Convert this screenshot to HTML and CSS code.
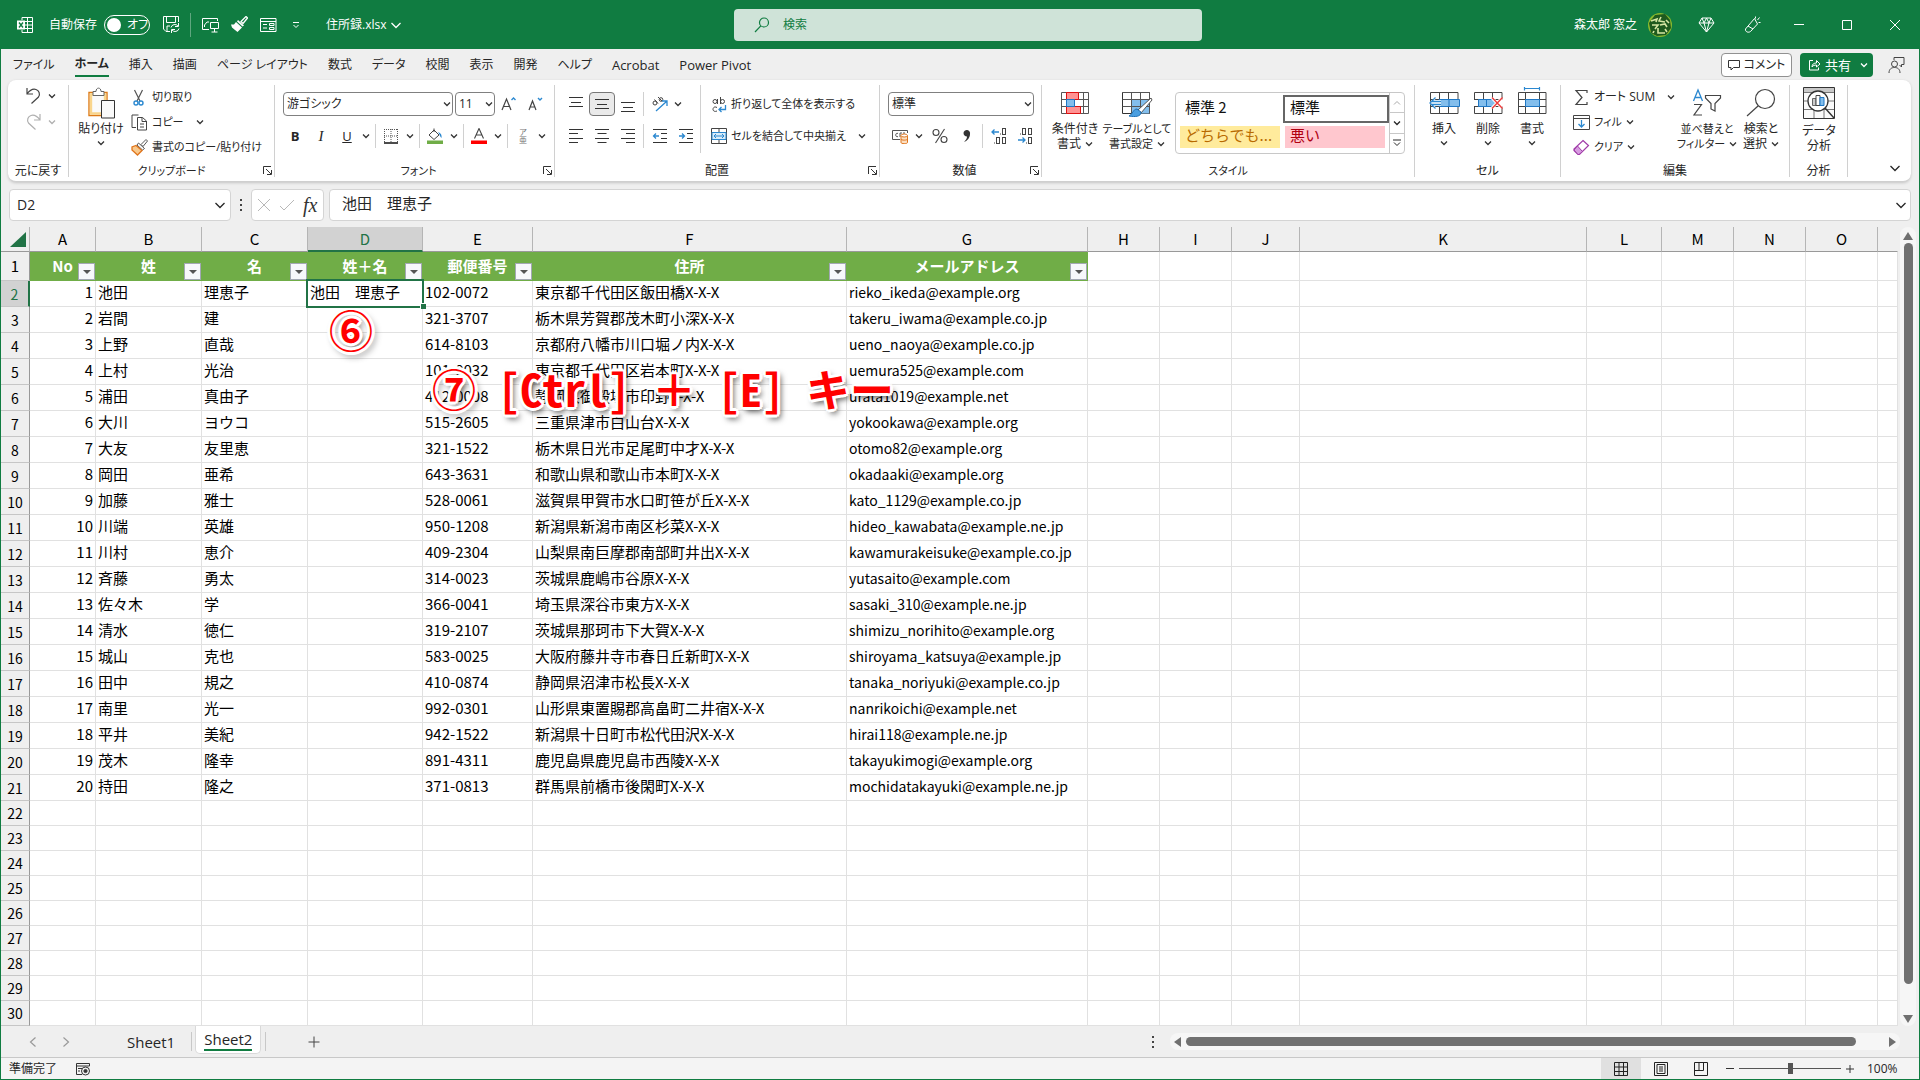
FILE: index.html
```html
<!DOCTYPE html>
<html lang="ja">
<head>
<meta charset="utf-8">
<title>住所録.xlsx - Excel</title>
<meta name="viewport" content="width=device-width, initial-scale=1">
<link rel="stylesheet" href="styles.css">
</head>
<body>
<svg class="defs" aria-hidden="true">
  <symbol id="chev" viewBox="0 0 8 8"><path d="M1 2.5 4 5.5 7 2.5" fill="none" stroke="currentColor" stroke-width="1.3"/></symbol>
  <symbol id="chev-lg" viewBox="0 0 12 12"><path d="M1.5 4 6 8.5 10.5 4" fill="none" stroke="currentColor" stroke-width="1.3"/></symbol>
  <symbol id="launch" viewBox="0 0 9 9"><path d="M.5 8V.5H8M3 3l5 5M8.5 4v4.5H4" fill="none" stroke="#333"/></symbol>
</svg>

<header class="titlebar">
  <div class="title-left">
    <svg class="app-icon" width="16" height="18" viewBox="0 0 16 18" fill="none" stroke="#fff"><path d="M5 4V1.500H15.500V16.500H5V14M10.500 1.500V16.500M5 5.500H15.500M8 9H15.500M5 12.500H15.500"/><path d="M0 4.500H8V13.500H0z" fill="#fff" stroke="none"/><path d="M2 6.500 6 11.500M6 6.500 2 11.500" stroke="#107c41" stroke-width="1.400"/></svg>
    <span class="autosave-label" id="as">自動保存</span>
    <button class="toggle" role="switch" aria-checked="false" aria-labelledby="as"><span class="knob"></span>オフ</button>
    <button class="tb save" aria-label="保存"><svg width="17" height="17" viewBox="0 0 17 17" fill="none" stroke="#fff"><path d="M7 15.500H3L.5 13V.5H15.500V6M3.500.5V6.500H12.500V.5M4 15V10H7"/><path d="M8 11.500a4 4 0 0 1 7-1.500M15.500 7V10.500H12M16 12.500a4 4 0 0 1-7 1.500M8.500 17V13.500H12"/></svg></button>
    <span class="tb-sep"></span>
    <button class="tb present" aria-label="スライド"><svg width="17" height="17" viewBox="0 0 17 17" fill="none" stroke="#fff"><path d="M7 13.500H.5V2.500H15.500V5M2.500 11V9L5 6H7"/><path d="M8.500 6.500H16.500V12.500H8.500zM12.500 12.500V16M9.500 16H15.500"/></svg></button>
    <button class="tb brush" aria-label="書式のコピー"><svg width="17" height="17" viewBox="0 0 17 17"><path d="M15 .5 16.500 2 12 7.500 10 5.500z" fill="none" stroke="#fff" stroke-width="1.300"/><path d="M7 4 13 9.500 11.500 10.500 6 5.500z" fill="#fff"/><path d="M5 6 11 11.500 6.500 16 4 14 1 11.500 0 8.500 3 8.500z" fill="#fff"/></svg></button>
    <button class="tb form" aria-label="フォーム"><svg width="17" height="16" viewBox="0 0 17 16" fill="none" stroke="#fff"><path d="M.5 1.500H16V14.500H.5zM.5 4.500H16M3 7.500H7M3 11H7M9.500 6.500H14V8.500H9.500zM9.500 10.500H14V12.500H9.500z"/></svg></button>
    <button class="tb more" aria-label="カスタマイズ"><svg width="8" height="8" viewBox="0 0 8 8" fill="none" stroke="#fff"><path d="M1 1.500H7M1.500 4 4 6.500 6.500 4"/></svg></button>
    <button class="filename">住所録.xlsx <svg width="12" height="12"><use href="#chev-lg"/></svg></button>
  </div>
  <label class="search"><svg width="16" height="16" viewBox="0 0 16 16" fill="none" stroke="#107c41" stroke-width="1.200"><circle cx="10" cy="5.500" r="4.500"/><path d="M6.800 8.800 1 15"/></svg><input type="text" placeholder="検索" aria-label="検索"></label>
  <div class="title-right">
    <span class="user">森太郎 窓之</span>
    <svg class="avatar" width="24" height="24" viewBox="0 0 24 24" fill="none"><circle cx="12" cy="12" r="12" fill="#8ab92d"/><path d="M7 2 17 1 22 7 23 15 18 22 9 23 3 20 1 10z" fill="#1f5a1e"/><path d="M3 8 9 6 8 9M13 4 11 8 17 9M18 7 21 10M4 12H10L7 16M12 12 17 11 19 14M6 18 5 20M10 15V20H17M17 16 19 19" stroke="#d6e6a4" stroke-width="1.600"/></svg>
    <button class="tb gem" aria-label="Premium"><svg width="17" height="16" viewBox="0 0 17 16" fill="none" stroke="#fff"><path d="M4 1H13L16 6 8.500 15 1 6zM1 6H16M4 1 6 6 8.500 15 11 6 13 1M6 6 8.500 1 11 6"/></svg></button>
    <button class="tb pen" aria-label="新機能"><svg width="17" height="17" viewBox="0 0 17 17" fill="none" stroke="#fff"><path d="M10.500 2.500 13.500 8 6.500 15.500C4.500 17 1 16 1.500 13zM4 10 9 13M11.500 2.500V.5M13.500 4 15.500 1.500M14.500 6.500H16.500"/></svg></button>
    <button class="win" aria-label="最小化"><svg width="12" height="12" viewBox="0 0 12 12"><path d="M1 5.500H11" stroke="#fff"/></svg></button>
    <button class="win" aria-label="最大化"><svg width="12" height="12" viewBox="0 0 12 12"><path d="M1.500 1.500H10.500V10.500H1.500z" fill="none" stroke="#fff"/></svg></button>
    <button class="win" aria-label="閉じる"><svg width="12" height="12" viewBox="0 0 12 12"><path d="M1 1 11 11M11 1 1 11" stroke="#fff"/></svg></button>
  </div>
</header>

<nav class="tabs">
  <div class="tab-list">
    <button>ファイル</button><button class="active">ホーム</button><button>挿入</button><button>描画</button><button>ページ レイアウト</button><button>数式</button><button>データ</button><button>校閲</button><button>表示</button><button>開発</button><button>ヘルプ</button><button class="latin">Acrobat</button><button class="latin">Power Pivot</button>
  </div>
  <button class="comment"><svg width="12" height="12" viewBox="0 0 12 12" fill="none" stroke="#333"><path d="M.5 1.500H11.500V8.500H5.500L3 11V8.500H.5z"/></svg>コメント</button>
  <button class="share"><svg width="13" height="13" viewBox="0 0 13 13" fill="none" stroke="#fff"><path d="M5 2.500H1.500V12H10.500V9.500M4 9C4 6 6 5 8.500 5V2.500L12 6 8.500 9V7C6.500 7 5 7.500 4 9z"/></svg>共有<svg class="c" width="8" height="8"><use href="#chev"/></svg></button>
  <button class="people" aria-label="共同編集"><svg width="17" height="18" viewBox="0 0 17 18" fill="none" stroke="#444"><path d="M6 4V1.500H16V8.500H13.500V11L11.500 9"/><circle cx="6.500" cy="8" r="3"/><path d="M1 17C1 13 3.500 11.500 6.500 11.500S12 13 12 17"/></svg></button>
</nav>

<section class="ribbon" aria-label="リボン">
  <div class="group g-undo">
    <div class="body col">
      <button class="row undo" aria-label="元に戻す"><svg width="15" height="17" viewBox="0 0 15 17" fill="none" stroke="#444" stroke-width="1.200"><path d="M1 1V7H7M1 7C4 3 7 1.500 10 2.500S14.500 7 12.500 10L5.500 16.500"/></svg><svg class="c" width="8" height="8"><use href="#chev"/></svg></button>
      <button class="row redo" aria-label="やり直し"><svg width="15" height="17" viewBox="0 0 15 17" fill="none" stroke="#b0b0b0" stroke-width="1.200"><path d="M14 1V7H8M14 7C11 3 8 1.500 5 2.500S.5 7 2.500 10L9.500 16.500"/></svg><svg class="c" width="8" height="8"><use href="#chev"/></svg></button>
    </div>
    <div class="label">元に戻す</div>
  </div>

  <div class="group g-clip">
    <div class="body">
      <button class="big"><svg width="28" height="32" viewBox="0 0 28 32"><path d="M2 5.500H20V28.500H2z" fill="#fff" stroke="#dd7a16" stroke-width="1.400"/><path d="M4 7.500H18V26.500H4z" fill="#fafafa" stroke="#f9d58c" stroke-width="2.400"/><path d="M6 8.500V4.500H9C9 0 14 0 14 4.500H17V8.500z" fill="#fff" stroke="#666"/><path d="M14.500 13.500H27.500V31H14.500z" fill="#fafafa" stroke="#333"/></svg><span>貼り付け</span><svg class="c" width="8" height="8"><use href="#chev"/></svg></button>
      <div class="stack tight">
        <button><svg width="17" height="17" viewBox="0 0 17 17" fill="none"><path d="M3.500 1 9 12M11.500 1 6 12" stroke="#555" stroke-width="1.200"/><circle cx="5" cy="14" r="2" stroke="#2b88d0" stroke-width="1.400"/><circle cx="10" cy="14" r="2" stroke="#2b88d0" stroke-width="1.400"/></svg>切り取り</button>
        <button><svg width="17" height="17" viewBox="0 0 17 17" fill="#fff" stroke="#444"><path d="M5 13.500H1V1H7.500"/><path d="M6.500 3.500H11.500L15.500 7V16H6.500zM11 3.500V7.500H15.500M9 10H13M9 13H13" /></svg>コピー<svg class="c gap" width="8" height="8"><use href="#chev"/></svg></button>
        <button><svg width="17" height="17" viewBox="0 0 17 17"><path d="M15 .5 16.500 2 12 7.500 10 5.500z" fill="#fff" stroke="#555"/><path d="M7.500 4 13.500 9.500 11.500 11 6 6z" fill="#fff" stroke="#555"/><path d="M5 6.500 11 11.500 6.500 16 1 11 1 8z" fill="#f9c98c" stroke="#e0751c" stroke-width="1.300"/></svg>書式のコピー/貼り付け</button>
      </div>
    </div>
    <div class="label tight">クリップボード<svg class="launch" width="9" height="9"><use href="#launch"/></svg></div>
  </div>

  <div class="group g-font">
    <div class="body col">
      <div class="row r1">
        <span class="combo f-name"><select aria-label="フォント"><option>游ゴシック</option></select><svg class="c" width="8" height="8"><use href="#chev"/></svg></span>
        <span class="combo f-size"><select aria-label="フォント サイズ"><option>11</option></select><svg class="c" width="8" height="8"><use href="#chev"/></svg></span>
        <button class="glyph ga" aria-label="拡大"><svg width="16" height="16" viewBox="0 0 16 16" fill="none" stroke="#444" stroke-width="1.200"><path d="M1 14 5.500 3 10 14M2.500 10.500H8.500"/><path d="M10.500 4 12.500 2 14.500 4" stroke="#2b88d0" stroke-width="1.400"/></svg></button>
        <button class="glyph ga" aria-label="縮小"><svg width="16" height="16" viewBox="0 0 16 16" fill="none" stroke="#444" stroke-width="1.200"><path d="M1 14 4.500 5 8 14M2.500 11H6.500"/><path d="M10 2 12 4 14 2" stroke="#2b88d0" stroke-width="1.400"/></svg></button>
      </div>
      <div class="row r2">
        <button class="glyph w24"><b>B</b></button><button class="glyph w28"><i>I</i></button><button class="glyph w24"><u>U</u></button><button class="arr" aria-label="下線"><svg class="c" width="8" height="8"><use href="#chev"/></svg></button>
        <span class="sep"></span>
        <button class="glyph w24" aria-label="罫線"><svg width="16" height="16" viewBox="0 0 16 16" fill="none" stroke="#555"><path d="M1 1.500H15M1.500 1V14M14.500 1V14M8 1V14M1 8H15" stroke-dasharray="1 1"/><path d="M1 15H15" stroke="#111" stroke-width="1.500"/></svg></button><button class="arr" aria-label="罫線の種類"><svg class="c" width="8" height="8"><use href="#chev"/></svg></button>
        <span class="sep"></span>
        <button class="glyph w24" aria-label="塗りつぶし"><svg width="16" height="16" viewBox="0 0 16 16"><path d="M2 7 7 2 12 7 7 11.500zM7 4V.5" fill="#fff" stroke="#444"/><path d="M11 4C14 5 15 7 14.500 10 13 9 13 7 11 4" fill="#2b88d0"/><path d="M0 12.500H16V16H0z" fill="#70ad47"/></svg></button><button class="arr" aria-label="塗りつぶしの色"><svg class="c" width="8" height="8"><use href="#chev"/></svg></button>
        <span class="sep"></span>
        <button class="glyph w24" aria-label="フォントの色"><svg width="16" height="16" viewBox="0 0 16 16"><path d="M3.500 10.500 8 .5 12.500 10.500M5 7H11" fill="none" stroke="#444" stroke-width="1.100"/><path d="M0 12.500H16V16H0z" fill="#f00"/></svg></button><button class="arr" aria-label="フォントの色の選択"><svg class="c" width="8" height="8"><use href="#chev"/></svg></button>
        <span class="sep"></span>
        <button class="glyph w24 ruby"><span>ア</span><span>亜</span></button><button class="arr" aria-label="ふりがな"><svg class="c" width="8" height="8"><use href="#chev"/></svg></button>
      </div>
    </div>
    <div class="label tight">フォント<svg class="launch" width="9" height="9"><use href="#launch"/></svg></div>
  </div>

  <div class="group g-align">
    <div class="body">
      <div class="col align-left">
        <div class="row r1">
          <button class="glyph w26" aria-label="上揃え"><svg width="16" height="16" viewBox="0 0 16 16" stroke="#333"><path d="M1 1.500H15M3 6.500H13M1 10.500H15"/></svg></button><button class="glyph w26 on" aria-label="上下中央揃え"><svg width="16" height="16" viewBox="0 0 16 16" stroke="#333"><path d="M1 3.500H15M3 8.500H13M1 12.500H15"/></svg></button><button class="glyph w26" aria-label="下揃え"><svg width="16" height="16" viewBox="0 0 16 16" stroke="#333"><path d="M1 6.500H15M3 11.500H13M1 15.500H15"/></svg></button>
          <span class="sep"></span>
          <button class="glyph w24" aria-label="方向"><svg width="17" height="16" viewBox="0 0 17 16" fill="none" stroke="#444"><circle cx="4" cy="7" r="2"/><path d="M3.500 3.500 7 7.500M7 1 11 5"/><circle cx="10" cy="3.500" r="1.800"/><path d="M5 15 15.500 5.500M11 5H16V10" stroke="#2b88d0" stroke-width="1.300"/></svg></button><button class="arr" aria-label="方向の選択"><svg class="c" width="8" height="8"><use href="#chev"/></svg></button>
        </div>
        <div class="row r2">
          <button class="glyph w26" aria-label="左揃え"><svg width="16" height="16" viewBox="0 0 16 16" stroke="#333"><path d="M1 1.500H15M1 5.500H10M1 10.500H15M1 14.500H10"/></svg></button><button class="glyph w26" aria-label="中央揃え"><svg width="16" height="16" viewBox="0 0 16 16" stroke="#333"><path d="M1 1.500H15M3.500 5.500H12.500M1 10.500H15M3.500 14.500H12.500"/></svg></button><button class="glyph w26" aria-label="右揃え"><svg width="16" height="16" viewBox="0 0 16 16" stroke="#333"><path d="M1 1.500H15M6 5.500H15M1 10.500H15M6 14.500H15"/></svg></button>
          <span class="sep"></span>
          <button class="glyph w26" aria-label="インデントを減らす"><svg width="16" height="16" viewBox="0 0 16 16" stroke="#333" fill="none"><path d="M1 1.500H15M9 5.500H15M9 10.500H15M1 14.500H15"/><path d="M7 8H1.500M4 5.500 1.500 8 4 10.500" stroke="#2b88d0" stroke-width="1.300"/></svg></button><button class="glyph w26" aria-label="インデントを増やす"><svg width="16" height="16" viewBox="0 0 16 16" stroke="#333" fill="none"><path d="M1 1.500H15M9 5.500H15M9 10.500H15M1 14.500H15"/><path d="M1 8H6.500M4 5.500 6.500 8 4 10.500" stroke="#2b88d0" stroke-width="1.300"/></svg></button>
        </div>
      </div>
      <div class="col align-right tight">
        <button class="wide r1"><svg width="16" height="17" viewBox="0 0 16 17" fill="none" stroke="#444"><circle cx="4" cy="5.500" r="2"/><path d="M6.500 3V8M9.500 1V8"/><circle cx="11.500" cy="5.500" r="2"/><path d="M6 11.500C3 10 2 12 2 13.500S4 16 6 15"/><path d="M14.500 9V13.500H8M10.500 11 8 13.500 10.500 16" stroke="#2b88d0" stroke-width="1.300"/></svg>折り返して全体を表示する</button>
        <button class="wide r2"><svg width="16" height="16" viewBox="0 0 16 16" fill="none"><path d="M.5.5H15.500V15.500H.5zM8 1V15" stroke="#444"/><path d="M1 4.500H15V11.500H1z" fill="#d9ecf9" stroke="#2b88d0"/><path d="M3 8H13M5 6 3 8 5 10M11 6 13 8 11 10" stroke="#2b88d0"/></svg>セルを結合して中央揃え<svg class="c gap" width="8" height="8"><use href="#chev"/></svg></button>
      </div>
    </div>
    <div class="label">配置<svg class="launch" width="9" height="9"><use href="#launch"/></svg></div>
  </div>

  <div class="group g-num">
    <div class="body col">
      <div class="row r1"><span class="combo f-num"><select aria-label="表示形式"><option>標準</option></select><svg class="c" width="8" height="8"><use href="#chev"/></svg></span></div>
      <div class="row r2">
        <button class="glyph w24" aria-label="通貨"><svg width="17" height="16" viewBox="0 0 17 16" fill="none" stroke="#555"><path d="M8 11.500H.5V2.500H15.500V5M6 5.500C3 4 3 10 6 8.500M8 9V5H10M11 5H13"/><path d="M9 7.500V14.500C9 16 15.500 16 15.500 14.500V7.500M9 11C9 12.500 15.500 12.500 15.500 11" fill="#fbe0c4" stroke="#e0751c"/><ellipse cx="12.200" cy="7.500" rx="3.200" ry="1.500" fill="#fff" stroke="#e0751c"/></svg></button><button class="arr" aria-label="通貨の種類"><svg class="c" width="8" height="8"><use href="#chev"/></svg></button>
        <button class="glyph w28" aria-label="パーセント"><svg width="16" height="16" viewBox="0 0 16 16" fill="none" stroke="#444" stroke-width="1.100"><circle cx="4" cy="4.500" r="3"/><circle cx="12" cy="11.500" r="3"/><path d="M12.500 1 3.500 15"/></svg></button>
        <button class="glyph w26" aria-label="桁区切り"><svg width="10" height="14" viewBox="0 0 10 14"><path d="M1.500 4A3.300 3.300 0 1 1 8 5C8 9 5 12 2 13 4 11 5 9.500 5 7.500 3 7.500 1.500 6 1.500 4" fill="#333"/></svg></button>
        <span class="sep"></span>
        <button class="glyph w26 dec" aria-label="小数点以下の桁数を増やす"><svg width="16" height="16" viewBox="0 0 16 16" fill="none" stroke="#444"><rect x="11.500" y=".5" width="3" height="6"/><rect x="5.500" y="9.500" width="3" height="6"/><rect x="11.500" y="9.500" width="3" height="6"/><path d="M3 15H4M9 6H10"/><path d="M8 4H1M3.500 1.500 1 4 3.500 6.500" stroke="#2b88d0" stroke-width="1.300"/></svg></button>
        <button class="glyph w26 dec" aria-label="小数点以下の桁数を減らす"><svg width="16" height="16" viewBox="0 0 16 16" fill="none" stroke="#444"><rect x="5.500" y=".5" width="3" height="6"/><rect x="11.500" y=".5" width="3" height="6"/><rect x="11.500" y="9.500" width="3" height="6"/><path d="M3 6H4M9 15H10"/><path d="M1 12H8M5.500 9.500 8 12 5.500 14.500" stroke="#2b88d0" stroke-width="1.300"/></svg></button>
      </div>
    </div>
    <div class="label">数値<svg class="launch" width="9" height="9"><use href="#launch"/></svg></div>
  </div>

  <div class="group g-style">
    <div class="body">
      <button class="big w50"><svg width="30" height="30" viewBox="0 0 30 30"><g transform="translate(1 5)"><path d="M.5.5H27.500V21.500H.5zM.5 7.500H27.500M.5 14.500H27.500M5.500.5V21.500M22.500.5V21.500" fill="#fff" stroke="#555"/><path d="M5.500.5H17.500V7.500H5.500zM5.500 14.500H19.500V21.500H5.500z" fill="#ff9292" stroke="#d11"/><path d="M5.500 7.500H13.500V14.500H5.500z" fill="#83beec" stroke="#1f77c4"/></g></svg><span>条件付き<br>書式<svg class="c" width="8" height="8"><use href="#chev"/></svg></span></button>
      <button class="big w74 tight"><svg width="32" height="30" viewBox="0 0 32 30"><g transform="translate(1 5)"><path d="M.5.5H27.500V21.500H.5z" fill="#fff" stroke="#333"/><path d="M10 7.500H27.500V21.500H10z" fill="#83beec"/><path d="M.5 7.500H27.500M.5 14.500H27.500M9.500.5V21.500M18.500.5V21.500M.5.5H27.500V21.500" fill="none" stroke="#555"/></g><path d="M30 11 17 23 20 26 31 13z" fill="#fff" stroke="#555"/><path d="M16 22C12 22 12 27 8 29 14 30 20 30 20 25z" fill="#4b9fe0" stroke="#1f6fb5"/></svg><span>テーブルとして<br>書式設定<svg class="c" width="8" height="8"><use href="#chev"/></svg></span></button>
      <div class="gallery">
        <div class="swatches">
          <button class="sw">標準 2</button><button class="sw sel">標準</button>
          <button class="sw neutral">どちらでも...</button><button class="sw bad">悪い</button>
        </div>
        <div class="scroller">
          <button aria-label="上へ" class="dim"><svg width="8" height="8" viewBox="0 0 8 8"><path d="M1 5.500 4 2.500 7 5.500" fill="none" stroke="currentColor"/></svg></button>
          <button aria-label="下へ"><svg width="8" height="8"><use href="#chev"/></svg></button>
          <button aria-label="その他"><svg width="8" height="8" viewBox="0 0 8 8"><path d="M0 1H8M1 3.500 4 6.500 7 3.500" fill="none" stroke="currentColor"/></svg></button>
        </div>
      </div>
    </div>
    <div class="label tight">スタイル</div>
  </div>

  <div class="group g-cell">
    <div class="body">
      <button class="big w44"><svg width="32" height="30" viewBox="0 0 32 30"><path d="M2.500 5.500H30V26.500H2.500zM2.500 12.500H30M2.500 19.500H30M11.500 5.500V26.500M20.500 5.500V26.500" fill="#fff" stroke="#444"/><path d="M11 12.500H31.500V19.500H11z" fill="#83beec" stroke="#1f77c4"/><path d="M21 12.500V19.500" stroke="#1f77c4"/><path d="M13 13H7L8 10 1 16 8 22 7 19H13z" fill="#fff"/><path d="M13 14.500H3M13 17.500H3M7.500 10.500 2 16 7.500 21.500" fill="none" stroke="#2b88d0" stroke-width="1.300"/></svg><span>挿入</span><svg class="c" width="8" height="8"><use href="#chev"/></svg></button>
      <button class="big w44"><svg width="32" height="30" viewBox="0 0 32 30"><path d="M2.500 5.500H30V26.500H2.500zM2.500 12.500H30M2.500 19.500H30M11.500 5.500V26.500M20.500 5.500V26.500" fill="#fff" stroke="#444"/><path d="M1 13H31V19H1z" fill="#fff"/><path d="M6.500 12.500H21L24 16 21 19.500H6.500zM14.500 12.500V19.500" fill="#83beec" stroke="#1f77c4"/><path d="M20 11 30 21M30 11 20 21" stroke="#fff" stroke-width="3"/><path d="M20 10.500 30.500 21.500M30.500 10.500 20 21.500" stroke="#ee3b3b" stroke-width="1.400"/></svg><span>削除</span><svg class="c" width="8" height="8"><use href="#chev"/></svg></button>
      <button class="big w44"><svg width="32" height="30" viewBox="0 0 32 30"><path d="M2.500 5.500H30V26.500H2.500zM2.500 12.500H30M2.500 19.500H30M9.500 5.500V26.500M23.500 5.500V26.500" fill="#fff" stroke="#444"/><path d="M9.500 12.500H23.500V19.500H9.500z" fill="#83beec" stroke="#1f77c4"/><path d="M8.500 1.500H23.500M8.500 0V3.500M23.500 0V3.500" stroke="#2b88d0" stroke-width="1.200"/></svg><span>書式</span><svg class="c" width="8" height="8"><use href="#chev"/></svg></button>
    </div>
    <div class="label">セル</div>
  </div>

  <div class="group g-edit">
    <div class="body">
      <div class="stack">
        <button><svg width="17" height="17" viewBox="0 0 17 17" fill="none" stroke="#444" stroke-width="1.200"><path d="M14 4V1.500H3L9 8.500 3 15.500H14V13"/></svg>オート SUM<svg class="c gap" width="8" height="8"><use href="#chev"/></svg></button>
        <button class="tight"><svg width="17" height="17" viewBox="0 0 17 17" fill="none" stroke="#444"><path d="M.5 1.500H16.500V15.500H.5zM.5 4.500H16.500"/><path d="M8.500 6V13M5.500 10 8.500 13 11.500 10" stroke="#2b88d0" stroke-width="1.300"/></svg>フィル<svg class="c" width="8" height="8"><use href="#chev"/></svg></button>
        <button class="tight"><svg width="17" height="17" viewBox="0 0 17 17"><path d="M10 1.500 15.500 6.500 6.500 15.500H5L1 11.500V10z" fill="#fff" stroke="#a03ba8" stroke-width="1.200"/><path d="M1 11 4.500 7 9.500 12.500 6 15.500H5z" fill="#d79be0" stroke="#a03ba8"/></svg>クリア<svg class="c" width="8" height="8"><use href="#chev"/></svg></button>
      </div>
      <button class="big w58 tight"><svg width="30" height="30" viewBox="0 0 30 30" fill="none"><path d="M1.500 14 6 3 10.500 14M3 10.500H9" stroke="#2b88d0" stroke-width="1.300"/><path d="M2 17.500H9.500L2 28H10" stroke="#444" stroke-width="1.200"/><path d="M13.500 8.500H28.500V11L23 16.500V24L19 22V16.500L13.500 11z" stroke="#444" stroke-width="1.200"/></svg><span>並べ替えと<br>フィルター<svg class="c" width="8" height="8"><use href="#chev"/></svg></span></button>
      <button class="big w50"><svg width="30" height="30" viewBox="0 0 30 30" fill="none" stroke="#444" stroke-width="1.200"><circle cx="19" cy="12" r="9.500"/><path d="M12 19 1 29"/></svg><span>検索と<br>選択<svg class="c" width="8" height="8"><use href="#chev"/></svg></span></button>
    </div>
    <div class="label">編集</div>
  </div>

  <div class="group g-data">
    <div class="body">
      <button class="big w50"><svg width="32" height="32" viewBox="0 0 32 32"><path d="M.5.5H31.500V31.500H.5z" fill="#fafafa" stroke="#333"/><path d="M1 1H31V5H1z" fill="#c8c8c8"/><path d="M1 5.500H31M1 14H31M1 22.500H31M11 5V31M21 5V31" stroke="#777"/><circle cx="15" cy="14" r="10" fill="#fff" stroke="#333" stroke-width="1.300"/><path d="M9.500 11.500H13V18.500H9.500z" fill="#ccc" stroke="#666"/><path d="M13 8.500H17V18.500H13z" fill="#fff" stroke="#444"/><path d="M17 10.500H21V18.500H17z" fill="#83beec" stroke="#1f77c4"/><path d="M22 21 31 31" stroke="#333" stroke-width="1.400"/></svg><span>データ<br>分析</span></button>
    </div>
    <div class="label">分析</div>
  </div>
  <button class="collapse" aria-label="リボンを折りたたむ"><svg width="12" height="12"><use href="#chev-lg"/></svg></button>
</section>

<div class="formula-bar">
  <label class="namebox"><input type="text" value="D2" aria-label="名前ボックス"><svg width="12" height="12"><use href="#chev-lg"/></svg></label>
  <svg class="dots" width="4" height="12" viewBox="0 0 4 12"><path d="M1 1H3M1 6H3M1 11H3" stroke="#444" stroke-width="2"/></svg>
  <div class="fx">
    <button aria-label="キャンセル"><svg width="14" height="14" viewBox="0 0 14 14"><path d="M1 1 13 13M13 1 1 13" stroke="#b8b8b8"/></svg></button>
    <button aria-label="入力"><svg width="16" height="14" viewBox="0 0 16 14"><path d="M1 8 5 12 15 2" fill="none" stroke="#b8b8b8"/></svg></button>
    <button class="fn" aria-label="関数の挿入"><i>fx</i></button>
  </div>
  <label class="formula"><input type="text" value="池田　理恵子" aria-label="数式バー"><svg width="12" height="12"><use href="#chev-lg"/></svg></label>
</div>

<main class="grid-area">
  <div class="sheet">
    <table>
      <colgroup><col class="rh"><col class="ca"><col class="cb"><col class="cb"><col class="cd"><col class="ce"><col class="cf"><col class="cg"><col class="ch"><col class="ch"><col class="cj"><col class="ck"><col class="cl"><col class="ch"><col class="ch"><col class="ch"><col></colgroup>
      <thead><tr><th class="corner"><svg width="16" height="15" viewBox="0 0 16 15"><path d="M16 0V15H0z" fill="#217346"/></svg></th><th>A</th><th>B</th><th>C</th><th class="sel">D</th><th>E</th><th>F</th><th>G</th><th>H</th><th>I</th><th>J</th><th>K</th><th>L</th><th>M</th><th>N</th><th>O</th><th></th></tr></thead>
      <tbody>
      <tr class="head"><th>1</th><td>No<button class="flt" aria-label="フィルター"></button></td><td>姓<button class="flt" aria-label="フィルター"></button></td><td>名<button class="flt" aria-label="フィルター"></button></td><td>姓＋名<button class="flt" aria-label="フィルター"></button></td><td>郵便番号<button class="flt" aria-label="フィルター"></button></td><td>住所<button class="flt" aria-label="フィルター"></button></td><td>メールアドレス<button class="flt" aria-label="フィルター"></button></td><td><td><td><td><td><td><td><td><td></tr>
      <tr><th class="sel">2</th><td>1<td>池田<td>理恵子<td class="active-cell">池田　理恵子<span class="cursor"></span><td>102-0072<td>東京都千代田区飯田橋X-X-X<td>rieko_ikeda@example.org<td><td><td><td><td><td><td><td><td></tr>
      <tr><th>3</th><td>2<td>岩間<td>建<td><td>321-3707<td>栃木県芳賀郡茂木町小深X-X-X<td>takeru_iwama@example.co.jp<td><td><td><td><td><td><td><td><td></tr>
      <tr><th>4</th><td>3<td>上野<td>直哉<td><td>614-8103<td>京都府八幡市川口堀ノ内X-X-X<td>ueno_naoya@example.co.jp<td><td><td><td><td><td><td><td><td></tr>
      <tr><th>5</th><td>4<td>上村<td>光治<td><td>101-0032<td>東京都千代田区岩本町X-X-X<td>uemura525@example.com<td><td><td><td><td><td><td><td><td></tr>
      <tr><th>6</th><td>5<td>浦田<td>真由子<td><td>412-0008<td>静岡県御殿場市印野X-X-X<td>urata1019@example.net<td><td><td><td><td><td><td><td><td></tr>
      <tr><th>7</th><td>6<td>大川<td>ヨウコ<td><td>515-2605<td>三重県津市白山台X-X-X<td>yokookawa@example.org<td><td><td><td><td><td><td><td><td></tr>
      <tr><th>8</th><td>7<td>大友<td>友里恵<td><td>321-1522<td>栃木県日光市足尾町中才X-X-X<td>otomo82@example.org<td><td><td><td><td><td><td><td><td></tr>
      <tr><th>9</th><td>8<td>岡田<td>亜希<td><td>643-3631<td>和歌山県和歌山市本町X-X-X<td>okadaaki@example.org<td><td><td><td><td><td><td><td><td></tr>
      <tr><th>10</th><td>9<td>加藤<td>雅士<td><td>528-0061<td>滋賀県甲賀市水口町笹が丘X-X-X<td>kato_1129@example.co.jp<td><td><td><td><td><td><td><td><td></tr>
      <tr><th>11</th><td>10<td>川端<td>英雄<td><td>950-1208<td>新潟県新潟市南区杉菜X-X-X<td>hideo_kawabata@example.ne.jp<td><td><td><td><td><td><td><td><td></tr>
      <tr><th>12</th><td>11<td>川村<td>恵介<td><td>409-2304<td>山梨県南巨摩郡南部町井出X-X-X<td>kawamurakeisuke@example.co.jp<td><td><td><td><td><td><td><td><td></tr>
      <tr><th>13</th><td>12<td>斉藤<td>勇太<td><td>314-0023<td>茨城県鹿嶋市谷原X-X-X<td>yutasaito@example.com<td><td><td><td><td><td><td><td><td></tr>
      <tr><th>14</th><td>13<td>佐々木<td>学<td><td>366-0041<td>埼玉県深谷市東方X-X-X<td>sasaki_310@example.ne.jp<td><td><td><td><td><td><td><td><td></tr>
      <tr><th>15</th><td>14<td>清水<td>徳仁<td><td>319-2107<td>茨城県那珂市下大賀X-X-X<td>shimizu_norihito@example.org<td><td><td><td><td><td><td><td><td></tr>
      <tr><th>16</th><td>15<td>城山<td>克也<td><td>583-0025<td>大阪府藤井寺市春日丘新町X-X-X<td>shiroyama_katsuya@example.jp<td><td><td><td><td><td><td><td><td></tr>
      <tr><th>17</th><td>16<td>田中<td>規之<td><td>410-0874<td>静岡県沼津市松長X-X-X<td>tanaka_noriyuki@example.co.jp<td><td><td><td><td><td><td><td><td></tr>
      <tr><th>18</th><td>17<td>南里<td>光一<td><td>992-0301<td>山形県東置賜郡高畠町二井宿X-X-X<td>nanrikoichi@example.net<td><td><td><td><td><td><td><td><td></tr>
      <tr><th>19</th><td>18<td>平井<td>美紀<td><td>942-1522<td>新潟県十日町市松代田沢X-X-X<td>hirai118@example.ne.jp<td><td><td><td><td><td><td><td><td></tr>
      <tr><th>20</th><td>19<td>茂木<td>隆幸<td><td>891-4311<td>鹿児島県鹿児島市西陵X-X-X<td>takayukimogi@example.org<td><td><td><td><td><td><td><td><td></tr>
      <tr><th>21</th><td>20<td>持田<td>隆之<td><td>371-0813<td>群馬県前橋市後閑町X-X-X<td>mochidatakayuki@example.ne.jp<td><td><td><td><td><td><td><td><td></tr>
      </tbody>
      <tbody class="blank">
      <tr><th>22</th><td><td><td><td><td><td><td><td><td><td><td><td><td><td><td><td></tr>
      <tr><th>23</th><td><td><td><td><td><td><td><td><td><td><td><td><td><td><td><td></tr>
      <tr><th>24</th><td><td><td><td><td><td><td><td><td><td><td><td><td><td><td><td></tr>
      <tr><th>25</th><td><td><td><td><td><td><td><td><td><td><td><td><td><td><td><td></tr>
      <tr><th>26</th><td><td><td><td><td><td><td><td><td><td><td><td><td><td><td><td></tr>
      <tr><th>27</th><td><td><td><td><td><td><td><td><td><td><td><td><td><td><td><td></tr>
      <tr><th>28</th><td><td><td><td><td><td><td><td><td><td><td><td><td><td><td><td></tr>
      <tr><th>29</th><td><td><td><td><td><td><td><td><td><td><td><td><td><td><td><td></tr>
      <tr><th>30</th><td><td><td><td><td><td><td><td><td><td><td><td><td><td><td><td></tr>
      </tbody>
    </table>
    <div class="note six">⑥</div>
    <div class="note seven">⑦ [Ctrl] ＋ [E] キー</div>
  </div>
  <div class="vscroll">
    <svg width="10" height="8" viewBox="0 0 10 8"><path d="M5 0 10 8H0z" fill="#707070"/></svg>
    <span class="thumb"></span>
    <svg width="10" height="8" viewBox="0 0 10 8"><path d="M5 8 10 0H0z" fill="#707070"/></svg>
  </div>
</main>

<div class="sheet-tabs">
  <button class="nav" aria-label="前のシート"><svg width="8" height="12" viewBox="0 0 8 12"><path d="M6.500 1.500 1.500 6 6.500 10.500" fill="none" stroke="#999" stroke-width="1.200"/></svg></button>
  <button class="nav" aria-label="次のシート"><svg width="8" height="12" viewBox="0 0 8 12"><path d="M1.500 1.500 6.500 6 1.500 10.500" fill="none" stroke="#999" stroke-width="1.200"/></svg></button>
  <button class="st">Sheet1</button>
  <button class="st current"><span>Sheet2</span></button>
  <span class="st-sep"></span>
  <button class="add" aria-label="新しいシート"><svg width="12" height="12" viewBox="0 0 12 12"><path d="M.5 6H11.500M6 .5V11.500" stroke="#444"/></svg></button>
  <svg class="dots" width="4" height="14" viewBox="0 0 4 14"><path d="M1 2H3M1 7H3M1 12H3" stroke="#444" stroke-width="2"/></svg>
  <div class="hscroll">
    <svg width="8" height="10" viewBox="0 0 8 10"><path d="M0 5 7 0V10z" fill="#707070"/></svg>
    <span class="thumb"></span>
    <svg width="8" height="10" viewBox="0 0 8 10"><path d="M8 5 1 0V10z" fill="#707070"/></svg>
  </div>
</div>

<footer class="status">
  <span>準備完了</span>
  <svg class="rec" width="15" height="14" viewBox="0 0 15 14" fill="none" stroke="#333"><path d="M6 12.500H.5V1.500H13.500V4M.5 4H13.500M2 6.500H6M2 9H4" /><circle cx="9.500" cy="9" r="4" fill="#f4f4f4"/><circle cx="9.500" cy="9" r="1.600" fill="#333"/></svg>
  <button class="view on" aria-label="標準"><svg width="14" height="14" viewBox="0 0 14 14" fill="none" stroke="#222"><path d="M.5.5H13.500V13.500H.5zM5 .5V13.500M9.500.5V13.500M.5 5H13.500M.5 9.500H13.500"/></svg></button>
  <button class="view" aria-label="ページ レイアウト"><svg width="14" height="14" viewBox="0 0 14 14" fill="none" stroke="#222"><path d="M.5.5H13.500V13.500H.5zM3 2.500H11V11.500H3zM5 5H9M5 7H9M5 9H9"/></svg></button>
  <button class="view" aria-label="改ページ プレビュー"><svg width="14" height="14" viewBox="0 0 14 14" fill="none" stroke="#222"><path d="M.5.5H13.500V13.500H.5zM5 .5V8.500M9.500.5V8.500M.5 8.500H9.500"/></svg></button>
  <button class="zb" aria-label="縮小"><svg width="10" height="10" viewBox="0 0 10 10"><path d="M1 4.500H9" stroke="#333"/></svg></button>
  <input class="zoom" type="range" min="0" max="100" value="50" aria-label="ズーム">
  <button class="zb" aria-label="拡大"><svg width="10" height="10" viewBox="0 0 10 10"><path d="M1 5H9M5 1V9" stroke="#333"/></svg></button>
  <span class="pct">100%</span>
</footer>
</body>
</html>
```
FILE: styles.css
```css
* { box-sizing: border-box; }
body {
  margin: 0;
  height: 100vh;
  display: flex;
  flex-direction: column;
  overflow: hidden;
  background: #efefef;
  border: solid #107c41;
  border-width: 0 1px 1px;
  color: #262626;
  font: 12px/16px "Open Sans", "Noto Sans CJK JP", sans-serif;
  font-feature-settings: "palt";
}
button, input, select { font: inherit; font-feature-settings: inherit; color: inherit; }
button { border: 0; padding: 0; background: none; white-space: nowrap; }
input { border: 0; background: none; padding: 0; outline: 0; min-width: 0; }
svg { flex: none; display: block; }
.defs { position: absolute; width: 0; height: 0; }

/* Title bar */
.titlebar {
  height: 49px;
  display: grid;
  grid-template-columns: 1fr 468px 1fr;
  align-items: center;
  padding-left: 16px;
  background: #107c41;
  color: #fff;
}
.title-left, .title-right, .filename { display: flex; align-items: center; }
.autosave-label { margin-left: 16px; width: 48px; }
.toggle {
  width: 46px; height: 20px; margin-left: 7px; padding-left: 2px;
  display: flex; align-items: center; gap: 6px;
  border: 1px solid #fff; border-radius: 10px; line-height: 16px;
}
.knob { width: 14px; height: 14px; border-radius: 7px; background: #fff; }
.tb { display: block; }
.save { margin-left: 13px; }
.tb-sep { width: 1px; height: 24px; background: #5fa77f; margin: 0 11px 0 10px; }
.brush, .form { margin-left: 12px; }
.more { margin-left: 15px; }
.filename { gap: 4px; margin-left: 26px; }
.search {
  height: 32px; display: flex; align-items: center; gap: 13px; padding-left: 20px;
  background: #cfe3d8; border-radius: 4px;
}
.search input { flex: 1; }
.search input::placeholder { color: #107c41; opacity: 1; }
.title-right { justify-content: flex-end; }
.avatar { margin-left: 11px; }
.gem { margin-left: 26px; }
.pen { margin-left: 29px; margin-right: 14px; }
.win { width: 48px; height: 48px; display: grid; place-items: center; }

/* Ribbon tabs */
.tabs { height: 31px; display: flex; align-items: center; padding: 0 14px 0 12px; }
.tab-list { flex: 1; display: flex; gap: 20px; }
.tab-list button { height: 24px; line-height: 22px; }
.tab-list .latin { font-size: 13px; }
.tab-list .active { font-weight: 700; border-bottom: 2px solid #107c41; }
.comment, .share { height: 24px; display: flex; align-items: center; border-radius: 4px; }
.comment { width: 71px; justify-content: center; gap: 4px; background: #fff; border: 1px solid #919191; margin-right: 8px; }
.share { width: 73px; padding: 0 5px 0 8px; gap: 4px; background: #107c41; color: #fff; font-size: 13px; margin-right: 15px; }

/* Ribbon */
.ribbon {
  height: 102px; margin: 0 8px 7px 7px; padding-top: 5px;
  display: flex; position: relative;
  background: #fff; border-radius: 8px;
  border-bottom: 1px solid #cfcfcf;
  box-shadow: 0 1px 3px rgba(0, 0, 0, .18);
}
.group { height: 92px; display: flex; flex-direction: column; border-right: 1px solid #d0d0d0; }
.body { flex: 1; display: flex; }
.col { display: flex; flex-direction: column; }
.row { display: flex; align-items: center; }
.label { line-height: 12px; text-align: center; position: relative; }
.tight { font-size: 11px; }
.launch { position: absolute; right: 2px; bottom: 2px; }
.c { color: #333; }
.share .c { margin-left: auto; color: #fff; }
.r1 { height: 24px; margin-top: 7px; }
.r2 { height: 24px; margin-top: 8px; }
.sep { width: 1px; height: 24px; background: #d0d0d0; margin: 0 3px 0 2px; }
.glyph { height: 24px; display: grid; place-items: center; font-size: 14px; }
.glyph b, .glyph i, .glyph u { font-size: 13px; }
.glyph i { font-family: "Liberation Serif", serif; font-size: 15px; }
.w24 { width: 24px; }
.w26 { width: 26px; }
.w28 { width: 28px; }
.arr { width: 14px; height: 24px; display: grid; place-items: center; }
.on { background: #eaeaea; border: 1px solid #777; border-radius: 4px; }
.big { display: flex; flex-direction: column; align-items: center; line-height: 15px; padding-top: 2px; }
.big > span { margin-top: 4px; }
.big span .c { display: inline-block; margin-left: 4px; }
.big > .c { margin-top: 3px; }
.stack { display: flex; flex-direction: column; }
.stack button { height: 25px; padding-bottom: 1px; display: flex; align-items: center; gap: 4px; }
.w50 { width: 50px; }
.w74 { width: 74px; }
.w44 { width: 44px; }
.w58 { width: 58px; }
.combo { height: 24px; position: relative; display: block; }
.combo select {
  appearance: none; width: 100%; height: 24px; padding: 0 3px;
  background: #fff; border: 1px solid #808080; border-radius: 4px; line-height: 20px;
}
.combo .c { position: absolute; right: 2px; top: 8px; pointer-events: none; }

.g-undo { width: 61px; }
.g-undo .body { padding: 2px 0 0 18px; gap: 9px; }
.g-undo .row { gap: 7px; }
.redo .c { color: #b0b0b0; }
.g-clip { width: 206px; }
.g-clip .big { width: 60px; margin-left: 2px; }
.g-clip .big > span { margin-top: 2px; }
.gap { margin-left: 8px; }
.g-font { width: 280px; padding-left: 8px; }
.f-name { width: 170px; }
.f-size { width: 40px; margin-left: 2px; }
.ga { width: 26px; margin-left: 1px; }
.ruby { line-height: 8px; font-size: 8px; color: #777; align-content: center; }
.g-align { width: 325px; }
.align-left { width: 146px; padding-left: 8px; border-right: 1px solid #d0d0d0; height: 68px; }
.align-right { padding-left: 10px; }
.wide { display: flex; align-items: center; gap: 4px; }
.g-num { width: 162px; padding-left: 8px; }
.f-num { width: 146px; }
.g-style { width: 373px; }
.g-style .body { padding-left: 8px; }
.gallery {
  display: flex; height: 62px; width: 230px; margin: 7px 0 0 1px;
  border: 1px solid #c8c8c8; border-radius: 4px; overflow: hidden;
}
.swatches { flex: 1; display: grid; grid-template-columns: 100px 106px; grid-template-rows: 28px 22px; gap: 3px; padding: 2px 0 0 4px; }
.sw { text-align: left; padding: 0 0 4px 5px; font: 15px/18px "Noto Sans CJK JP", sans-serif; font-feature-settings: normal; color: #111; }
.sel.sw { border: 2px solid #666; }
.sw.neutral { background: #ffeb9c; color: #b86a00; }
.sw.bad { background: #ffc7ce; color: #b00010; width: 100px; margin-left: 2px; }
.scroller { width: 15px; display: flex; flex-direction: column; border-left: 1px solid #c8c8c8; }
.scroller button { flex: 1; display: grid; place-items: center; }
.scroller button + button { border-top: 1px solid #c8c8c8; }
.scroller .dim { color: #aaa; }
.g-cell { width: 146px; }
.g-cell .body { padding-left: 7px; }
.g-edit { width: 229px; }
.g-edit .stack { width: 117px; padding-left: 12px; }
.g-data { width: 58px; }
.g-data .body { padding-left: 4px; }
.collapse { margin: auto 10px 7px auto; }

/* Formula bar */
.formula-bar { height: 32px; display: flex; align-items: center; margin: 0 8px 6px 8px; font-size: 14px; }
.namebox, .fx, .formula { height: 32px; display: flex; align-items: center; background: #fff; border: 1px solid #d4d4d4; border-radius: 4px; }
.namebox { width: 222px; padding: 0 4px 0 7px; }
.namebox input, .formula input { flex: 1; }
.formula-bar .dots { margin: 0 8px; }
.fx { width: 73px; padding-left: 5px; gap: 8px; margin-right: 5px; }
.fn { font: 20px/20px "Liberation Serif", serif; color: #333; }
.formula { flex: 1; padding: 0 3px 0 12px; font: 15px/20px "Noto Sans CJK JP", sans-serif; font-feature-settings: normal; }
.formula input { padding-bottom: 4px; }

/* Worksheet */
.grid-area { flex: 1; min-height: 0; display: flex; gap: 2px; padding-right: 3px; }
.sheet { flex: 1; position: relative; overflow: hidden; }
table { width: 100%; table-layout: fixed; border-collapse: separate; border-spacing: 0; font: 15px/22px "Noto Sans CJK JP", sans-serif; font-feature-settings: normal; color: #000; }
.rh { width: 29px; }
.ca { width: 66px; }
.cb { width: 106px; }
.cd { width: 115px; }
.ce { width: 110px; }
.cf { width: 314px; }
.cg { width: 241px; }
.ch { width: 72px; }
.cj { width: 68px; }
.ck { width: 287px; }
.cl { width: 75px; }
th, td { padding: 0; height: 26px; white-space: nowrap; border: solid #e1e1e1; border-width: 0 1px 1px 0; }
th { background: #efefef; font-weight: 400; text-align: center; }
td { padding-left: 2px; padding-bottom: 3px; background: #fff; }
td:nth-child(2) { text-align: right; padding: 0 2px 3px 0; }
td:nth-child(8) { font-size: 14px; }
thead th { height: 25px; border-right-color: #b5b5b5; border-bottom-color: #999; }
thead .sel { background: #d2d2d2; border-bottom: 2px solid #217346; color: #217346; }
thead th:last-child { border-right-color: #efefef; }
.corner { padding: 0 3px 0 9px; }
tbody th { border-right-color: #999; border-bottom-color: #c6c6c6; font-size: 14px; }
tbody th.sel { background: #d2d2d2; border-right: 2px solid #217346; color: #217346; }
.blank th, .blank td { height: 25px; }
.head th, .head td { height: 29px; font-size: 15px; }
.head td:nth-child(-n+8) { position: relative; padding: 0 0 1px; text-align: center; font-weight: 700; background: #70ad47; border-color: #70ad47; color: #fff; }
.flt { position: absolute; right: 0; bottom: 0; width: 17px; height: 17px; background: #f7f8fb; border: 1px solid #a3a8b4; }
.flt::after { content: ""; position: absolute; left: 4px; top: 6px; border: solid transparent; border-width: 4px 4px 0; border-top-color: #555; }
.active-cell { position: relative; }
.cursor { position: absolute; inset: -2px; border: 2px solid #217346; z-index: 1; }
.cursor::after { content: ""; position: absolute; right: -4px; bottom: -3px; width: 5px; height: 5px; background: #217346; border: solid #fff; border-width: 1px 0 0 1px; box-sizing: content-box; }

/* Step annotations over the sheet */
.note {
  position: absolute;
  color: #f00;
  font: 700 44px/56px "Noto Sans Mono CJK JP", "Noto Sans CJK JP", monospace;
  font-feature-settings: normal;
  white-space: nowrap;
  text-shadow: -3px 0 #fff, 3px 0 #fff, 0 -3px #fff, 0 3px #fff, -2px -2px #fff, 2px -2px #fff, -2px 2px #fff, 2px 2px #fff, 3px 4px 6px rgba(0, 0, 0, .8);
}
.six { left: 328px; top: 74px; }
.seven { left: 431px; top: 133px; }

.vscroll { width: 16px; border-radius: 8px; background: #f6f6f6; display: flex; flex-direction: column; align-items: center; padding: 5px 0 3px; }
.vscroll .thumb { width: 9px; margin: 3px 0 31px; flex: 1; border-radius: 5px; background: #707070; }

/* Sheet tabs */
.sheet-tabs { height: 31px; display: flex; align-items: center; padding: 0 19px 0 28px; font-size: 15px; }
.nav { width: 8px; margin-right: 25px; }
.st { height: 19px; line-height: 18px; padding: 0 16px; border-right: 1px solid #c8c8c8; margin-left: 16px; }
.st.current { height: 29px; align-self: flex-start; margin: -1px 4px 2px 3px; padding: 3px 8px 0; background: #fff; border: 1px solid #d9d9d9; border-top: 0; border-radius: 0 0 5px 5px; }
.st.current span { display: block; height: 21px; line-height: 18px; border-bottom: 2px solid #107c41; }
.st-sep { width: 1px; height: 19px; background: #c8c8c8; }
.add { margin-left: 42px; }
.sheet-tabs .dots { margin-left: auto; }
.hscroll { width: 39%; margin-left: 15px; height: 17px; border-radius: 8px; background: #f6f6f6; display: flex; align-items: center; padding: 0 4px; }
.hscroll .thumb { flex: 1; height: 9px; margin: 0 32px 0 4px; border-radius: 5px; background: #707070; }

/* Status bar */
.status { height: 22px; display: flex; align-items: center; padding: 0 18px 0 8px; background: #f4f4f4; border-top: 1px solid #c8c8c8; }
.rec { margin: 0 auto 0 19px; }
.view { width: 40px; height: 21px; display: grid; place-items: center; }
.view.on { background: #e0e0e0; border: 0; border-radius: 0; }
.zb { margin: 0 4px; }
.zoom { appearance: none; width: 102px; height: 16px; margin: 0; background: linear-gradient(#555, #555) center / 100% 1px no-repeat; }
.zoom::-webkit-slider-thumb { appearance: none; width: 5px; height: 11px; background: #555; }
.pct { width: 34px; margin-left: 8px; }
```
